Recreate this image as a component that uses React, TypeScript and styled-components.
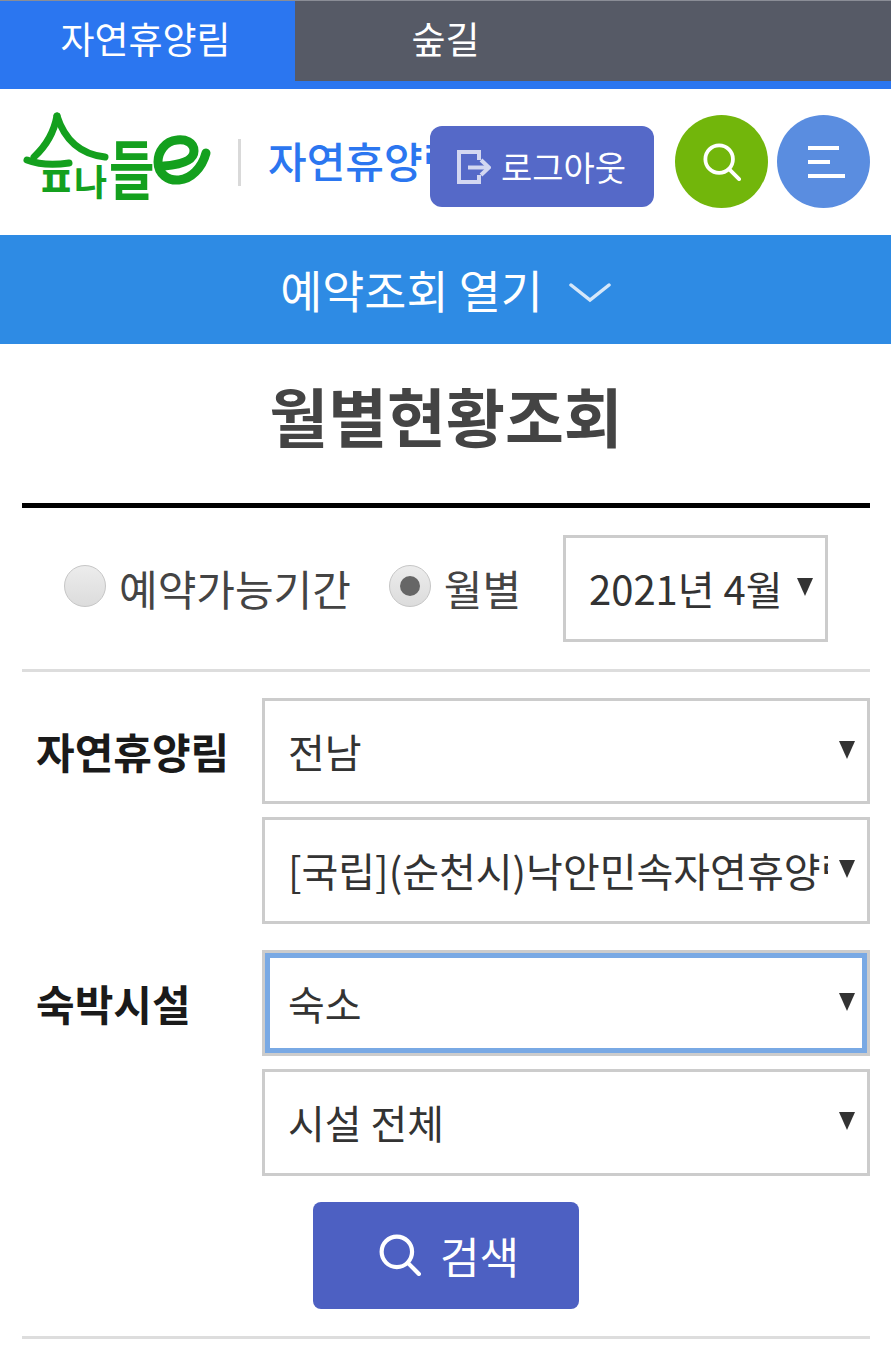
import React from "react";
import styled, { createGlobalStyle } from "styled-components";

const GlobalStyle = createGlobalStyle`
  html, body {
    margin: 0;
    padding: 0;
    background: #fff;
  }
  body {
    font-family: "Noto Sans CJK KR", "Noto Sans", sans-serif;
    color: #444;
  }
  * {
    box-sizing: border-box;
  }
`;

const TabBar = styled.div`
  display: flex;
  height: 89px;
  border-top: 1px solid #8a8d96;
  border-bottom: 8px solid #2b76f0;
  background: #565a66;
`;

const Tab = styled.a<{ $active?: boolean }>`
  width: 295px;
  display: flex;
  align-items: center;
  justify-content: center;
  padding: 0 ${(p) => (p.$active ? "4px" : "0")} 5px ${(p) => (p.$active ? "0" : "6px")};
  font-size: 37px;
  line-height: 1;
  color: #fff;
  background: ${(p) => (p.$active ? "#2b76f0" : "transparent")};
`;

const Header = styled.header`
  position: relative;
  height: 146px;
  display: flex;
  align-items: center;
  padding-left: 22px;
  overflow: hidden;
`;

const LogoMark = styled.svg`
  width: 190px;
  height: 95px;
  margin-top: -9px;
  flex: none;
  overflow: visible;
`;

const Divider = styled.span`
  width: 3px;
  height: 47px;
  margin: 0 27px 0 26px;
  background: #d9d9d9;
  flex: none;
`;

const SiteTitle = styled.h2`
  margin: -4px 0 0;
  font-size: 42px;
  font-weight: 500;
  line-height: 1;
  color: #2b76f0;
  white-space: nowrap;
`;

const Actions = styled.div`
  position: absolute;
  top: 0;
  right: 21px;
  bottom: 0;
  display: flex;
  align-items: center;
`;

const LogoutButton = styled.button`
  width: 224px;
  height: 81px;
  margin: 9px 21px 0 0;
  padding: 0 0 0 27px;
  display: flex;
  align-items: center;
  gap: 10px;
  border: 0;
  border-radius: 12px;
  background: #5569c8;
  color: #fff;
  font-family: inherit;
  font-size: 34px;
  line-height: 1;
`;

const RoundButton = styled.button<{ $color: string }>`
  width: 93px;
  height: 93px;
  margin-top: -1px;
  padding: 0;
  display: flex;
  align-items: center;
  justify-content: center;
  border: 0;
  border-radius: 50%;
  background: ${(p) => p.$color};
`;

const MenuButton = styled(RoundButton)`
  margin-left: 9px;
  flex-direction: column;
  align-items: flex-start;
  gap: 10px;
  padding-left: 31px;
`;

const MenuLine = styled.span<{ $width: number }>`
  display: block;
  width: ${(p) => p.$width}px;
  height: 4px;
  background: #fff;
`;

const ReserveBar = styled.div`
  height: 109px;
  display: flex;
  align-items: center;
  justify-content: center;
  gap: 26px;
  background: #2e8be4;
  color: #fff;
  font-size: 45.7px;
  line-height: 1;

  svg {
    margin-top: 6px;
  }
`;

const Content = styled.main`
  padding: 0 21px 0 22px;
`;

const PageTitle = styled.h1`
  height: 164px;
  margin: 0;
  border-bottom: 5px solid #000;
  display: flex;
  align-items: center;
  justify-content: center;
  padding-bottom: 20px;
  font-size: 64px;
  font-weight: 700;
  line-height: 1;
  color: #444;
`;

const PeriodRow = styled.div`
  display: flex;
  align-items: center;
  padding: 27px 42px 27px 42px;
  border-bottom: 3px solid #ddd;
`;

const RadioLabel = styled.label`
  display: flex;
  align-items: center;
  gap: 13px;
  margin-right: 38px;
  font-size: 42px;
  line-height: 1;
  color: #444;
`;

const Radio = styled.input.attrs({ type: "radio" })`
  appearance: none;
  width: 42px;
  height: 42px;
  margin: -4px 0 0;
  flex: none;
  display: flex;
  align-items: center;
  justify-content: center;
  border: 1px solid #c6c6c6;
  border-radius: 50%;
  background: linear-gradient(#ececec, #dcdcdc);

  &:checked::before {
    content: "";
    width: 20px;
    height: 20px;
    border-radius: 50%;
    background: #666;
  }
`;

const SelectBox = styled.div<{ $width?: number; $focused?: boolean }>`
  position: relative;
  width: ${(p) => (p.$width ? `${p.$width}px` : "100%")};
  height: 106.5px;
  flex: none;
  margin-left: ${(p) => (p.$width ? "auto" : "0")};
  border: 3px solid #ccc;
  background: #fff;
  box-shadow: ${(p) => (p.$focused ? "inset 0 0 0 5px #79a9e4" : "none")};

  &::after {
    content: "";
    position: absolute;
    top: 40px;
    right: 12px;
    border-style: solid;
    border-width: 18px 8.5px 0;
    border-color: #333 transparent transparent;
    pointer-events: none;
  }
`;

const NativeSelect = styled.select`
  appearance: none;
  width: 100%;
  height: 100%;
  padding: 0 39px 0 23px;
  border: 0;
  outline: 0;
  background: transparent;
  color: #333;
  font-family: inherit;
  font-size: 40px;
`;

const SearchForm = styled.form`
  display: flex;
  flex-direction: column;
  gap: 26px;
  padding-top: 26px;
`;

const FieldGroup = styled.div`
  display: grid;
  grid-template-columns: 240px 608px;
`;

const FieldLabel = styled.label`
  align-self: start;
  padding-left: 14px;
  height: 106.5px;
  display: flex;
  align-items: center;
  font-size: 42px;
  font-weight: 700;
  line-height: 1;
  color: #1a1a1a;
`;

const FieldStack = styled.div`
  display: flex;
  flex-direction: column;
  gap: 13px;
`;

const ButtonRow = styled.div`
  display: flex;
  justify-content: center;
  padding-bottom: 27px;
  border-bottom: 3px solid #ddd;
`;

const SearchButton = styled.button`
  width: 266px;
  height: 107px;
  padding: 0 0 0 6px;
  display: flex;
  align-items: center;
  justify-content: center;
  gap: 19px;
  border: 0;
  border-radius: 8px;
  background: #4d60c2;
  color: #fff;
  font-family: inherit;
  font-size: 43px;
  line-height: 1;
`;

const LogoText = styled.text`
  font-family: "Noto Sans CJK KR", sans-serif;
  font-weight: 700;
  fill: #14a01e;
`;

const Logo = () => (
  <LogoMark viewBox="0 0 190 95" aria-label="숲나들e">
    <g fill="none" stroke="#14a01e" strokeLinecap="round" strokeLinejoin="round">
      <path strokeWidth="7" d="M35 6 C32 22 24 36 12 47" />
      <path strokeWidth="7" d="M35 6 C42 28 56 44 83 47" />
      <path strokeWidth="7" d="M5 50 C18 55 34 55 47 53" />
      <path
        strokeWidth="9"
        d="M142 56 C154 55 172 52 172 41 C172 32 163 29 155 30 C143 31 136 42 136 52 C136 64 146 71 157 70 C169 69 180 58 184 43"
      />
    </g>
    <LogoText transform="translate(14 87) scale(1.45 1.4)" fontSize="30">ㅍ</LogoText>
    <LogoText x="52" y="86" fontSize="36">나</LogoText>
    <LogoText transform="translate(87 84) scale(1.12 1.45)" fontSize="44">들</LogoText>
  </LogoMark>
);

const LogoutIcon = () => (
  <svg width="34" height="34" viewBox="0 0 34 34" fill="none" stroke="#d3d7f1" strokeWidth="4">
    <path d="M22 10 V2 H2 V32 H22 V25" />
    <path d="M11 17.5 H30" />
    <path d="M24 10 L32 17.5 L24 25" />
  </svg>
);

const SearchIcon = ({ size }: { size: number }) => (
  <svg width={size} height={size} viewBox="0 0 40 40" fill="none" stroke="#fff" strokeWidth="4" strokeLinecap="round">
    <circle cx="17" cy="17" r="14.5" />
    <path d="M27.5 27.5 L38 38" />
  </svg>
);

const ChevronDown = () => (
  <svg width="42" height="20" viewBox="0 0 42 20" fill="none" stroke="#d5e7f9" strokeWidth="3.5" strokeLinecap="round">
    <path d="M2 2 L21 17 L40 2" />
  </svg>
);

const App = () => {
  return (
    <>
      <GlobalStyle />
      <TabBar>
        <Tab $active>자연휴양림</Tab>
        <Tab>숲길</Tab>
      </TabBar>

      <Header>
        <Logo />
        <Divider />
        <SiteTitle>자연휴양림</SiteTitle>
        <Actions>
          <LogoutButton>
            <LogoutIcon />
            로그아웃
          </LogoutButton>
          <RoundButton $color="#72b60b" aria-label="검색">
            <SearchIcon size={38} />
          </RoundButton>
          <MenuButton $color="#5a8de0" aria-label="메뉴">
            <MenuLine $width={31} />
            <MenuLine $width={22} />
            <MenuLine $width={37} />
          </MenuButton>
        </Actions>
      </Header>

      <ReserveBar>
        예약조회 열기
        <ChevronDown />
      </ReserveBar>

      <Content>
        <PageTitle>월별현황조회</PageTitle>

        <PeriodRow>
          <RadioLabel>
            <Radio name="period" />
            예약가능기간
          </RadioLabel>
          <RadioLabel>
            <Radio name="period" defaultChecked />
            월별
          </RadioLabel>
          <SelectBox $width={265}>
            <NativeSelect defaultValue="2021-04">
              <option value="2021-04">2021년 4월</option>
            </NativeSelect>
          </SelectBox>
        </PeriodRow>

        <SearchForm>
          <FieldGroup>
            <FieldLabel>자연휴양림</FieldLabel>
            <FieldStack>
              <SelectBox>
                <NativeSelect>
                  <option>전남</option>
                </NativeSelect>
              </SelectBox>
              <SelectBox>
                <NativeSelect>
                  <option>[국립](순천시)낙안민속자연휴양림</option>
                </NativeSelect>
              </SelectBox>
            </FieldStack>
          </FieldGroup>

          <FieldGroup>
            <FieldLabel>숙박시설</FieldLabel>
            <FieldStack>
              <SelectBox $focused>
                <NativeSelect>
                  <option>숙소</option>
                </NativeSelect>
              </SelectBox>
              <SelectBox>
                <NativeSelect>
                  <option>시설 전체</option>
                </NativeSelect>
              </SelectBox>
            </FieldStack>
          </FieldGroup>

          <ButtonRow>
            <SearchButton type="button">
              <SearchIcon size={42} />
              검색
            </SearchButton>
          </ButtonRow>
        </SearchForm>
      </Content>
    </>
  );
};

export default App;
